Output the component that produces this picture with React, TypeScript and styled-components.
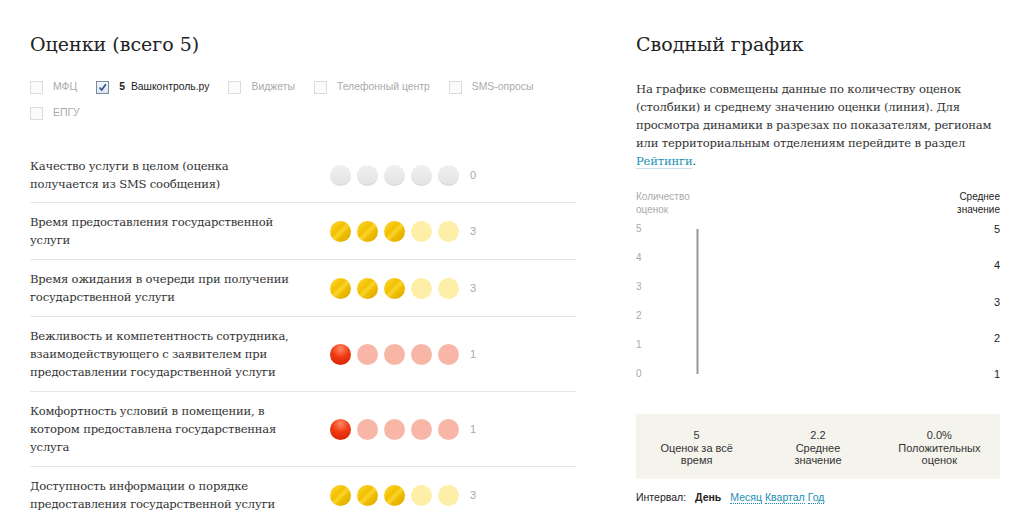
import styled, { createGlobalStyle } from "styled-components";

type Tone = "gray" | "gold" | "red";

interface Criterion {
  id: number;
  title: string;
  score: number;
}

const SOURCES = [
  { key: "mfc", label: "МФЦ", count: 0 },
  { key: "vk", label: "Вашконтроль.ру", count: 5 },
  { key: "widgets", label: "Виджеты", count: 0 },
  { key: "phone", label: "Телефонный центр", count: 0 },
  { key: "sms", label: "SMS-опросы", count: 0 },
  { key: "epgu", label: "ЕПГУ", count: 0 },
];

const CRITERIA: Criterion[] = [
  { id: 1, title: "Качество услуги в целом (оценка получается из SMS сообщения)", score: 0 },
  { id: 2, title: "Время предоставления государственной услуги", score: 3 },
  { id: 3, title: "Время ожидания в очереди при получении государственной услуги", score: 3 },
  {
    id: 4,
    title:
      "Вежливость и компетентность сотрудника, взаимодействующего с заявителем при предоставлении государственной услуги",
    score: 1,
  },
  {
    id: 5,
    title: "Комфортность условий в помещении, в котором предоставлена государственная услуга",
    score: 1,
  },
  { id: 6, title: "Доступность информации о порядке предоставления государственной услуги", score: 3 },
];

const STATS = [
  { value: "5", label: "Оценок за всё время" },
  { value: "2.2", label: "Среднее значение" },
  { value: "0.0%", label: "Положительных оценок" },
];

const INTERVALS = ["День", "Месяц", "Квартал", "Год"];

const toneOf = (score: number): Tone => {
  if (score === 0) return "gray";
  if (score >= 3) return "gold";
  return "red";
};

const GlobalStyle = createGlobalStyle`
  html, body {
    margin: 0;
    padding: 0;
    background: #fff;
  }
  body {
    font-family: "DejaVu Serif", serif;
    color: #333;
  }
`;

const Page = styled.div`
  display: grid;
  grid-template-columns: 546px 364px;
  column-gap: 60px;
  padding: 28px 30px 0;
`;

const Column = styled.section`
  display: flex;
  flex-direction: column;
`;

const Heading = styled.h2`
  margin: 0;
  font-family: "DejaVu Serif", serif;
  font-weight: normal;
  font-size: 19px;
  line-height: 32px;
  color: #222;
`;

const SourceList = styled.div`
  display: flex;
  flex-wrap: wrap;
  margin-top: 20px;
  row-gap: 12px;
`;

const Source = styled.label<{ $active: boolean }>`
  display: flex;
  align-items: center;
  gap: 10px;
  margin-right: 19px;
  font-family: "Liberation Sans", Arial, sans-serif;
  font-size: 10.4px;
  line-height: 14px;
  color: ${({ $active }) => ($active ? "#222" : "#aaa")};
`;

const Box = styled.span<{ $checked: boolean }>`
  display: inline-flex;
  align-items: center;
  justify-content: center;
  width: 11px;
  height: 11px;
  border: 1px solid ${({ $checked }) => ($checked ? "#7a8aa0" : "#dcdcdc")};
  background: ${({ $checked }) => ($checked ? "linear-gradient(#f4f6fa, #dde3ec)" : "#fbfbfb")};
`;

const Count = styled.b`
  font-weight: bold;
  margin-right: 6px;
`;

const CriteriaList = styled.div`
  display: flex;
  flex-direction: column;
  margin-top: 27px;
`;

const CriterionRow = styled.div`
  display: flex;
  align-items: center;
  padding: 10px 0;
  border-top: 1px solid #e6e6e6;

  &:first-child {
    border-top: none;
    padding-bottom: 9px;
  }
`;

const CriterionTitle = styled.p`
  margin: 0 32px 0 0;
  width: 268px;
  font-family: "DejaVu Serif", serif;
  font-size: 11.6px;
  letter-spacing: -0.2px;
  line-height: 18px;
  color: #333;
`;

const Dots = styled.div`
  display: flex;
  align-items: center;
  gap: 6px;
`;

const dotFill = (tone: Tone, filled: boolean) => {
  if (tone === "gray") return "linear-gradient(#f0f0f0, #e3e3e3)";
  if (tone === "gold") {
    return filled
      ? "linear-gradient(135deg, #ffdc3a 0%, #f2c000 40%, #fbd530 52%, #eebd00 64%, #d9a600 100%)"
      : "#fdefa8";
  }
  return filled ? "radial-gradient(circle at 50% 22%, #ff8a66 0%, #f03a12 45%, #d41c00 100%)" : "#f8b7a6";
};

const Dot = styled.span<{ $tone: Tone; $filled: boolean }>`
  width: 21px;
  height: 21px;
  border-radius: 50%;
  background: ${({ $tone, $filled }) => dotFill($tone, $filled)};
  box-shadow: ${({ $tone }) =>
    $tone === "gray" ? "inset 0 -1px 1px rgba(0, 0, 0, 0.06)" : "none"};
`;

const Score = styled.span`
  margin-left: 11px;
  font-family: "Liberation Sans", Arial, sans-serif;
  font-size: 11px;
  color: #aaa;
`;

const Lead = styled.p`
  margin: 20px 0 0;
  font-family: "DejaVu Serif", serif;
  font-size: 11.6px;
  letter-spacing: -0.2px;
  line-height: 18px;
  color: #333;
`;

const Link = styled.a`
  color: #1a8fb5;
  text-decoration: none;
  border-bottom: 1px solid #c7e2ec;
`;

const Chart = styled.div`
  display: grid;
  grid-template-columns: 1fr auto;
  margin-top: 20px;
  font-family: "Liberation Sans", Arial, sans-serif;
  font-size: 10px;
`;

const AxisCaption = styled.div<{ $right?: boolean }>`
  line-height: 13px;
  color: ${({ $right }) => ($right ? "#222" : "#aaa")};
  text-align: ${({ $right }) => ($right ? "right" : "left")};
`;

const Plot = styled.div`
  grid-column: 1 / -1;
  display: flex;
  height: 157px;
  margin-top: 7px;
`;

const Axis = styled.div<{ $right?: boolean }>`
  display: flex;
  flex-direction: column;
  justify-content: space-between;
  width: 20px;
  line-height: 12px;
  font-size: ${({ $right }) => ($right ? "11px" : "10px")};
  text-align: ${({ $right }) => ($right ? "right" : "left")};
  color: ${({ $right }) => ($right ? "#222" : "#aaa")};
`;

const Bars = styled.svg`
  flex: 1;
  height: 100%;
`;

const StatsBox = styled.div`
  display: grid;
  grid-template-columns: repeat(3, 1fr);
  margin-top: 34px;
  padding: 15px 0 12px;
  background: #f4f3ec;
  font-family: "Liberation Sans", Arial, sans-serif;
  font-size: 11px;
  line-height: 12.5px;
  color: #333;
  text-align: center;
`;

const Stat = styled.div`
  display: flex;
  flex-direction: column;
  align-items: center;
`;

const StatLabel = styled.span`
  max-width: 90px;
`;

const IntervalBar = styled.div`
  display: flex;
  align-items: baseline;
  gap: 3px;
  margin-top: 12px;
  font-family: "Liberation Sans", Arial, sans-serif;
  font-size: 10.5px;
  color: #222;
`;

const IntervalLabel = styled.span`
  margin-right: 6px;
`;

const IntervalOption = styled.a<{ $current: boolean }>`
  color: ${({ $current }) => ($current ? "#222" : "#1a8fb5")};
  font-weight: ${({ $current }) => ($current ? "bold" : "normal")};
  margin-right: ${({ $current }) => ($current ? "6px" : "0")};
  text-decoration: none;
  border-bottom: ${({ $current }) => ($current ? "none" : "1px dotted #1a8fb5")};
`;

const CheckMark = () => (
  <svg width="9" height="9" viewBox="0 0 9 9">
    <path d="M1.5 4.5 L3.7 7 L7.8 1.2" fill="none" stroke="#2b4f9a" strokeWidth="1.6" />
  </svg>
);

const App = () => {
  const leftTicks = [5, 4, 3, 2, 1, 0];
  const rightTicks = [5, 4, 3, 2, 1];

  return (
    <>
      <GlobalStyle />
      <Page>
        <Column>
          <Heading>Оценки (всего 5)</Heading>
          <SourceList>
            {SOURCES.map((src) => {
              const active = src.count > 0;
              return (
                <Source key={src.key} $active={active}>
                  <Box $checked={active}>{active && <CheckMark />}</Box>
                  <span>
                    {active && <Count>{src.count}</Count>}
                    {src.label}
                  </span>
                </Source>
              );
            })}
          </SourceList>
          <CriteriaList>
            {CRITERIA.map((item) => {
              const tone = toneOf(item.score);
              return (
                <CriterionRow key={item.id}>
                  <CriterionTitle>{item.title}</CriterionTitle>
                  <Dots>
                    {[1, 2, 3, 4, 5].map((n) => (
                      <Dot key={n} $tone={tone} $filled={n <= item.score} />
                    ))}
                  </Dots>
                  <Score>{item.score}</Score>
                </CriterionRow>
              );
            })}
          </CriteriaList>
        </Column>

        <Column>
          <Heading>Сводный график</Heading>
          <Lead>
            На графике совмещены данные по количеству оценок (столбики) и среднему значению оценки
            (линия). Для просмотра динамики в разрезах по показателям, регионам или территориальным
            отделениям перейдите в раздел <Link href="#">Рейтинги</Link>.
          </Lead>
          <Chart>
            <AxisCaption>
              Количество
              <br />
              оценок
            </AxisCaption>
            <AxisCaption $right>
              Среднее
              <br />
              значение
            </AxisCaption>
            <Plot>
              <Axis>
                {leftTicks.map((t) => (
                  <span key={t}>{t}</span>
                ))}
              </Axis>
              <Bars viewBox="0 0 320 157" preserveAspectRatio="none">
                <rect x="40" y="6" width="2" height="145" fill="#9a9a9a" />
              </Bars>
              <Axis $right>
                {rightTicks.map((t) => (
                  <span key={t}>{t}</span>
                ))}
              </Axis>
            </Plot>
          </Chart>
          <StatsBox>
            {STATS.map((s) => (
              <Stat key={s.label}>
                <span>{s.value}</span>
                <StatLabel>{s.label}</StatLabel>
              </Stat>
            ))}
          </StatsBox>
          <IntervalBar>
            <IntervalLabel>Интервал:</IntervalLabel>
            {INTERVALS.map((name, i) => (
              <IntervalOption key={name} href="#" $current={i === 0}>
                {name}
              </IntervalOption>
            ))}
          </IntervalBar>
        </Column>
      </Page>
    </>
  );
};

export default App;
